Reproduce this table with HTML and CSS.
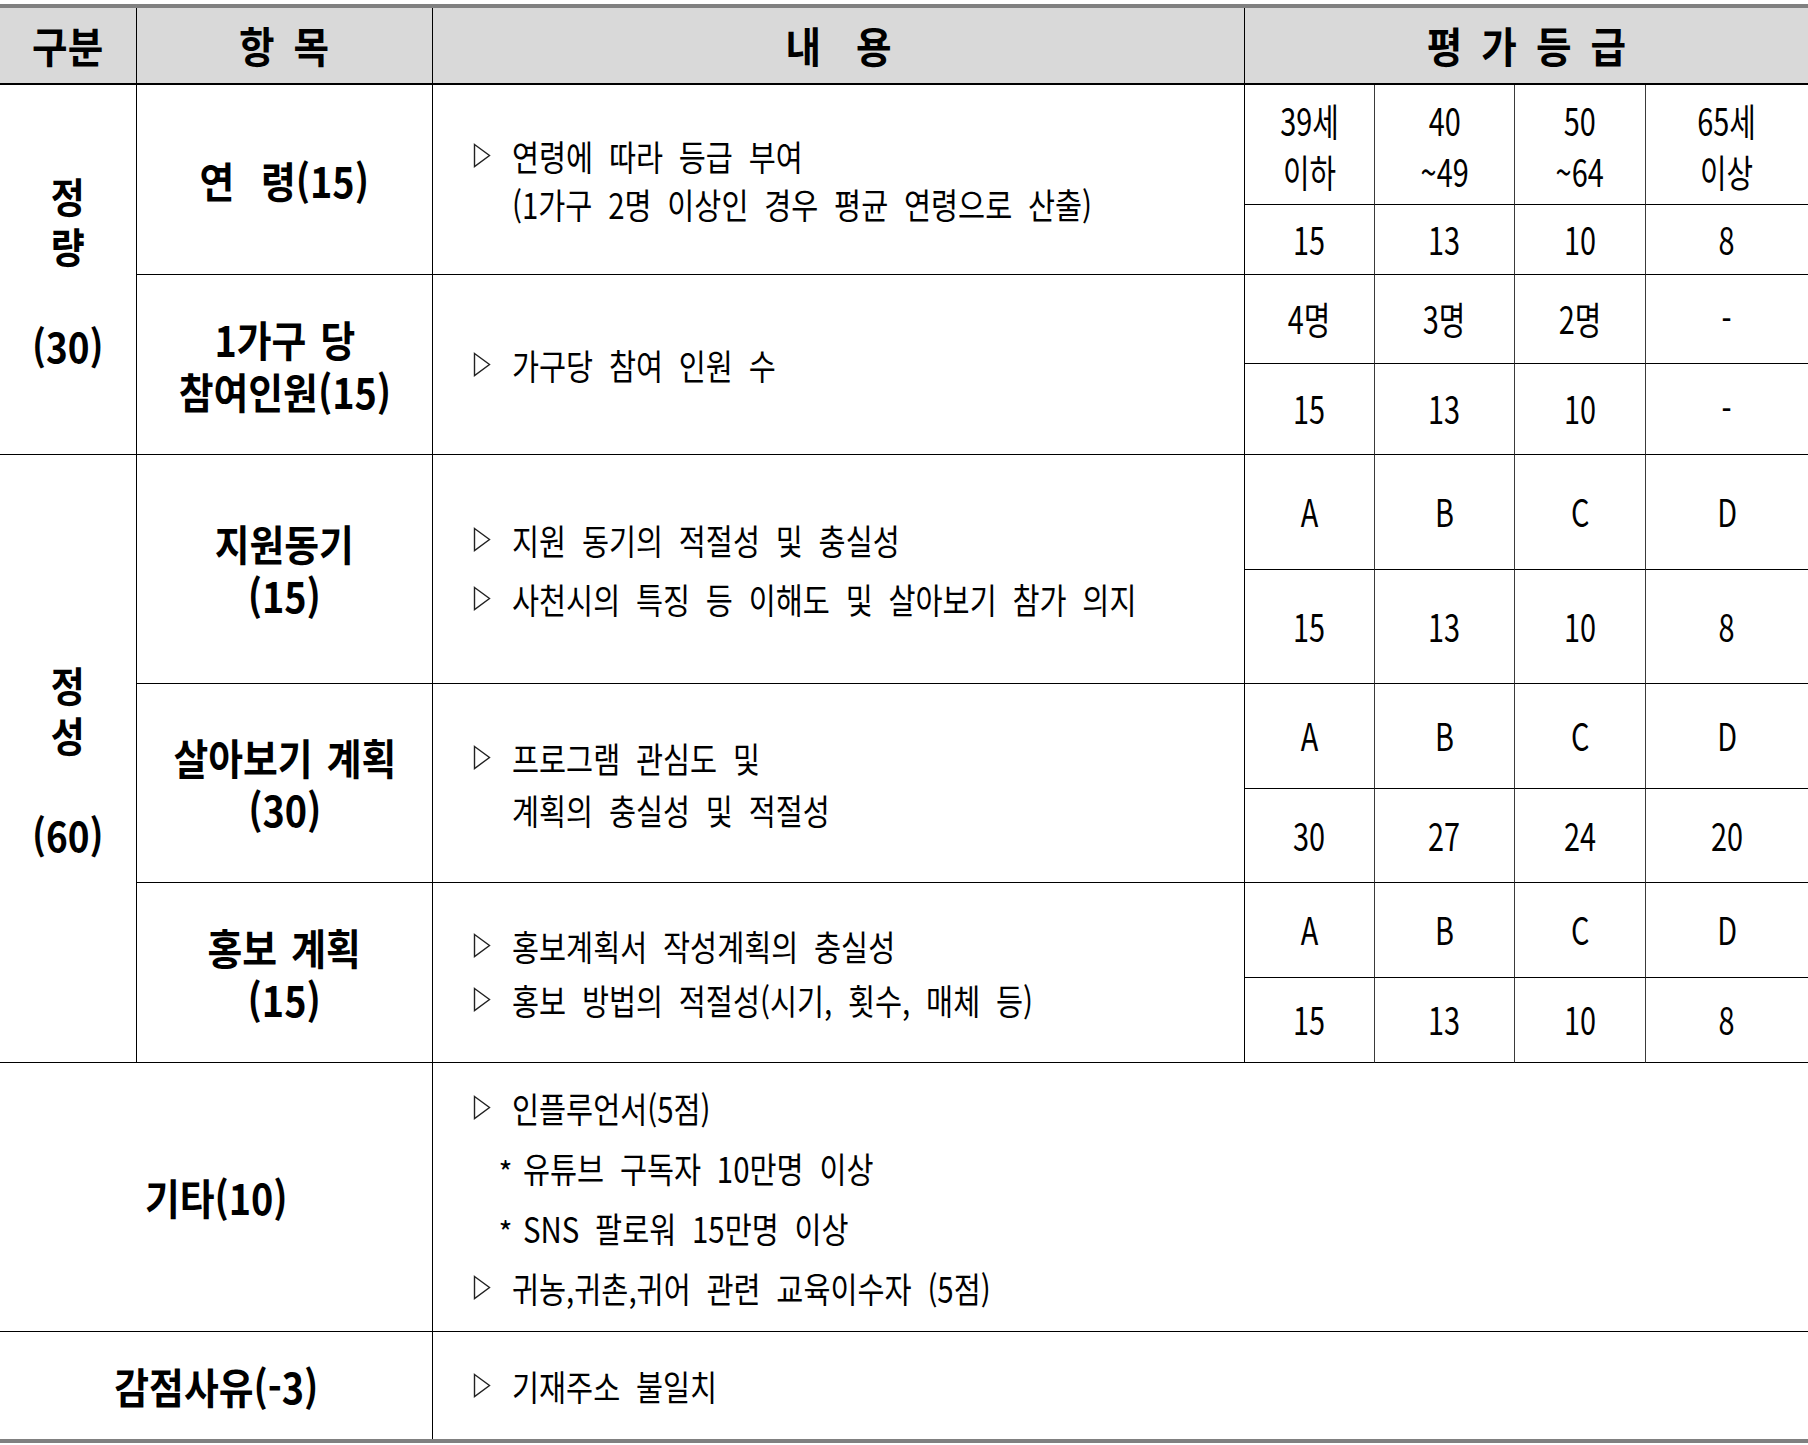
FILE: index.html
```html
<!DOCTYPE html>
<html lang="ko">
<head>
<meta charset="utf-8">
<title>평가 기준표</title>
<link rel="stylesheet" href="styles.css">
</head>
<body>
<div class="page">
<table class="eval">
  <colgroup>
    <col class="c-cat"><col class="c-item"><col class="c-desc">
    <col class="c-g1"><col class="c-g2"><col class="c-g3"><col class="c-g4">
  </colgroup>
  <thead>
    <tr class="h-head">
      <th class="first"><span class="hx">구분</span></th>
      <th><span class="hx">항 목</span></th>
      <th><span class="hx wide">내 용</span></th>
      <th colspan="4"><span class="hx">평 가 등 급</span></th>
    </tr>
  </thead>
  <tbody>
    <tr class="h-1a">
      <td class="first cat" rowspan="4"><span class="cx">정<br>량<br><br>(30)</span></td>
      <td class="item" rowspan="2"><span class="ix gap">연 령(15)</span></td>
      <td class="desc p48" rowspan="2">
        <div class="ln"><svg class="tri" viewBox="0 0 18 25"><path d="M1.5 1.5 L16.5 12.5 L1.5 23.5 Z"/></svg><span class="tx">연령에 따라 등급 부여</span></div>
        <div class="ln ind"><span class="tx">(1가구 2명 이상인 경우 평균 연령으로 산출)</span></div>
      </td>
      <td class="g"><span class="gx two">39세<br>이하</span></td>
      <td class="g"><span class="gx two">40<br>~49</span></td>
      <td class="g"><span class="gx two">50<br>~64</span></td>
      <td class="g"><span class="gx two">65세<br>이상</span></td>
    </tr>
    <tr class="h-1b">
      <td class="g"><span class="gx">15</span></td>
      <td class="g"><span class="gx">13</span></td>
      <td class="g"><span class="gx">10</span></td>
      <td class="g"><span class="gx">8</span></td>
    </tr>
    <tr class="h-2a">
      <td class="item" rowspan="2"><span class="ix">1가구 당<br>참여인원(15)</span></td>
      <td class="desc" rowspan="2">
        <div class="ln"><svg class="tri" viewBox="0 0 18 25"><path d="M1.5 1.5 L16.5 12.5 L1.5 23.5 Z"/></svg><span class="tx">가구당 참여 인원 수</span></div>
      </td>
      <td class="g"><span class="gx">4명</span></td>
      <td class="g"><span class="gx">3명</span></td>
      <td class="g"><span class="gx">2명</span></td>
      <td class="g"><span class="gx">-</span></td>
    </tr>
    <tr class="h-2b">
      <td class="g"><span class="gx">15</span></td>
      <td class="g"><span class="gx">13</span></td>
      <td class="g"><span class="gx">10</span></td>
      <td class="g"><span class="gx">-</span></td>
    </tr>
    <tr class="h-3a">
      <td class="first cat" rowspan="6"><span class="cx">정<br>성<br><br>(60)</span></td>
      <td class="item" rowspan="2"><span class="ix">지원동기<br>(15)</span></td>
      <td class="desc p59" rowspan="2">
        <div class="ln"><svg class="tri" viewBox="0 0 18 25"><path d="M1.5 1.5 L16.5 12.5 L1.5 23.5 Z"/></svg><span class="tx">지원 동기의 적절성 및 충실성</span></div>
        <div class="ln"><svg class="tri" viewBox="0 0 18 25"><path d="M1.5 1.5 L16.5 12.5 L1.5 23.5 Z"/></svg><span class="tx">사천시의 특징 등 이해도 및 살아보기 참가 의지</span></div>
      </td>
      <td class="g"><span class="gx">A</span></td>
      <td class="g"><span class="gx">B</span></td>
      <td class="g"><span class="gx">C</span></td>
      <td class="g"><span class="gx">D</span></td>
    </tr>
    <tr class="h-3b">
      <td class="g"><span class="gx">15</span></td>
      <td class="g"><span class="gx">13</span></td>
      <td class="g"><span class="gx">10</span></td>
      <td class="g"><span class="gx">8</span></td>
    </tr>
    <tr class="h-4a">
      <td class="item" rowspan="2"><span class="ix">살아보기 계획<br>(30)</span></td>
      <td class="desc p52" rowspan="2">
        <div class="ln"><svg class="tri" viewBox="0 0 18 25"><path d="M1.5 1.5 L16.5 12.5 L1.5 23.5 Z"/></svg><span class="tx">프로그램 관심도 및</span></div>
        <div class="ln ind"><span class="tx">계획의 충실성 및 적절성</span></div>
      </td>
      <td class="g"><span class="gx">A</span></td>
      <td class="g"><span class="gx">B</span></td>
      <td class="g"><span class="gx">C</span></td>
      <td class="g"><span class="gx">D</span></td>
    </tr>
    <tr class="h-4b">
      <td class="g"><span class="gx">30</span></td>
      <td class="g"><span class="gx">27</span></td>
      <td class="g"><span class="gx">24</span></td>
      <td class="g"><span class="gx">20</span></td>
    </tr>
    <tr class="h-5a">
      <td class="item" rowspan="2"><span class="ix">홍보 계획<br>(15)</span></td>
      <td class="desc p54" rowspan="2">
        <div class="ln"><svg class="tri" viewBox="0 0 18 25"><path d="M1.5 1.5 L16.5 12.5 L1.5 23.5 Z"/></svg><span class="tx">홍보계획서 작성계획의 충실성</span></div>
        <div class="ln"><svg class="tri" viewBox="0 0 18 25"><path d="M1.5 1.5 L16.5 12.5 L1.5 23.5 Z"/></svg><span class="tx">홍보 방법의 적절성(시기, 횟수, 매체 등)</span></div>
      </td>
      <td class="g"><span class="gx">A</span></td>
      <td class="g"><span class="gx">B</span></td>
      <td class="g"><span class="gx">C</span></td>
      <td class="g"><span class="gx">D</span></td>
    </tr>
    <tr class="h-5b">
      <td class="g"><span class="gx">15</span></td>
      <td class="g"><span class="gx">13</span></td>
      <td class="g"><span class="gx">10</span></td>
      <td class="g"><span class="gx">8</span></td>
    </tr>
    <tr class="h-6">
      <td class="first item" colspan="2"><span class="ix">기타(10)</span></td>
      <td class="desc p60" colspan="5">
        <div class="ln"><svg class="tri" viewBox="0 0 18 25"><path d="M1.5 1.5 L16.5 12.5 L1.5 23.5 Z"/></svg><span class="tx">인플루언서(5점)</span></div>
        <div class="ln sub"><span class="star">*</span><span class="tx">유튜브 구독자 10만명 이상</span></div>
        <div class="ln sub"><span class="star">*</span><span class="tx">SNS 팔로워 15만명 이상</span></div>
        <div class="ln"><svg class="tri" viewBox="0 0 18 25"><path d="M1.5 1.5 L16.5 12.5 L1.5 23.5 Z"/></svg><span class="tx">귀농,귀촌,귀어 관련 교육이수자 (5점)</span></div>
      </td>
    </tr>
    <tr class="h-7 lastrow">
      <td class="first item" colspan="2"><span class="ix">감점사유(-3)</span></td>
      <td class="desc" colspan="5">
        <div class="ln"><svg class="tri" viewBox="0 0 18 25"><path d="M1.5 1.5 L16.5 12.5 L1.5 23.5 Z"/></svg><span class="tx">기재주소 불일치</span></div>
      </td>
    </tr>
  </tbody>
</table>
</div>
</body>
</html>
```

FILE: styles.css
```css
html, body {
  margin: 0;
  padding: 0;
  background: #ffffff;
}

body {
  font-family: "Noto Sans CJK KR", "Noto Sans", sans-serif;
  color: #000000;
}

.page {
  padding-top: 4px;
}

.eval {
  width: 1808px;
  table-layout: fixed;
  border-collapse: separate;
  border-spacing: 0;
  border-top: 4px solid #808080;
  border-bottom: 4px solid #808080;
}

.c-cat { width: 136px; }
.c-item { width: 296px; }
.c-desc { width: 812px; }
.c-g1 { width: 130px; }
.c-g2 { width: 140px; }
.c-g3 { width: 131px; }
.c-g4 { width: 163px; }

.eval th,
.eval td {
  padding: 0;
  border-left: 1px solid #000000;
  border-bottom: 1px solid #000000;
  text-align: center;
  vertical-align: middle;
  overflow: hidden;
}

.eval .first {
  border-left: none;
}

.eval thead th {
  background: #d9d9d9;
  border-bottom: 2px solid #000000;
}

.eval .lastrow td {
  border-bottom: none;
}

.eval td.g + td.g {
  border-left-color: #3a3a3a;
}

/* row heights */
.h-head { height: 77px; }
.h-1a { height: 120px; }
.h-1b { height: 70px; }
.h-2a { height: 89px; }
.h-2b { height: 91px; }
.h-3a { height: 115px; }
.h-3b { height: 114px; }
.h-4a { height: 105px; }
.h-4b { height: 94px; }
.h-5a { height: 95px; }
.h-5b { height: 85px; }
.h-6 { height: 269px; }
.h-7 { height: 107px; }

/* header text */
.hx {
  display: inline-block;
  white-space: nowrap;
  font-size: 42px;
  font-weight: 700;
  line-height: 1;
  word-spacing: 9px;
  transform: scaleX(0.92);
  transform-origin: center;
}

.hx.wide {
  word-spacing: 26px;
}

/* category column */
.cx {
  display: inline-block;
  white-space: nowrap;
  font-size: 41px;
  font-weight: 700;
  line-height: 50px;
  transform: scaleX(0.9);
  transform-origin: center;
}

/* item column */
.ix {
  display: inline-block;
  white-space: nowrap;
  font-size: 42px;
  font-weight: 700;
  line-height: 52px;
  word-spacing: 4px;
  transform: scaleX(0.9);
  transform-origin: center;
}

.ix.gap {
  word-spacing: 18px;
}

/* grade cells */
.gx {
  display: inline-block;
  white-space: nowrap;
  font-size: 38px;
  font-weight: 400;
  line-height: 1;
  transform: scaleX(0.76);
  transform-origin: center;
}

.gx.two {
  line-height: 51px;
}

/* description cells */
.desc {
  text-align: left;
  padding-left: 40px !important;
}

.ln {
  display: flex;
  align-items: center;
  height: 52px;
}

.p48 .ln { height: 48px; }
.p52 .ln { height: 52px; }
.p54 .ln { height: 54px; }
.p59 .ln { height: 59px; }
.p60 .ln { height: 60px; }

.ln.ind {
  padding-left: 39px;
}

.ln.sub {
  padding-left: 15px;
}

.tri {
  flex: 0 0 auto;
  width: 18px;
  height: 25px;
  margin-right: 21px;
  fill: none;
  stroke: #222222;
  stroke-width: 1.4;
}

.star {
  flex: 0 0 auto;
  width: 35px;
  font-size: 30px;
  line-height: 1;
  padding-top: 8px;
}

.tx {
  flex: 0 0 auto;
  display: inline-block;
  white-space: nowrap;
  font-size: 35px;
  font-weight: 400;
  line-height: 1;
  word-spacing: 9px;
  transform: scaleX(0.84);
  transform-origin: left center;
}
```
